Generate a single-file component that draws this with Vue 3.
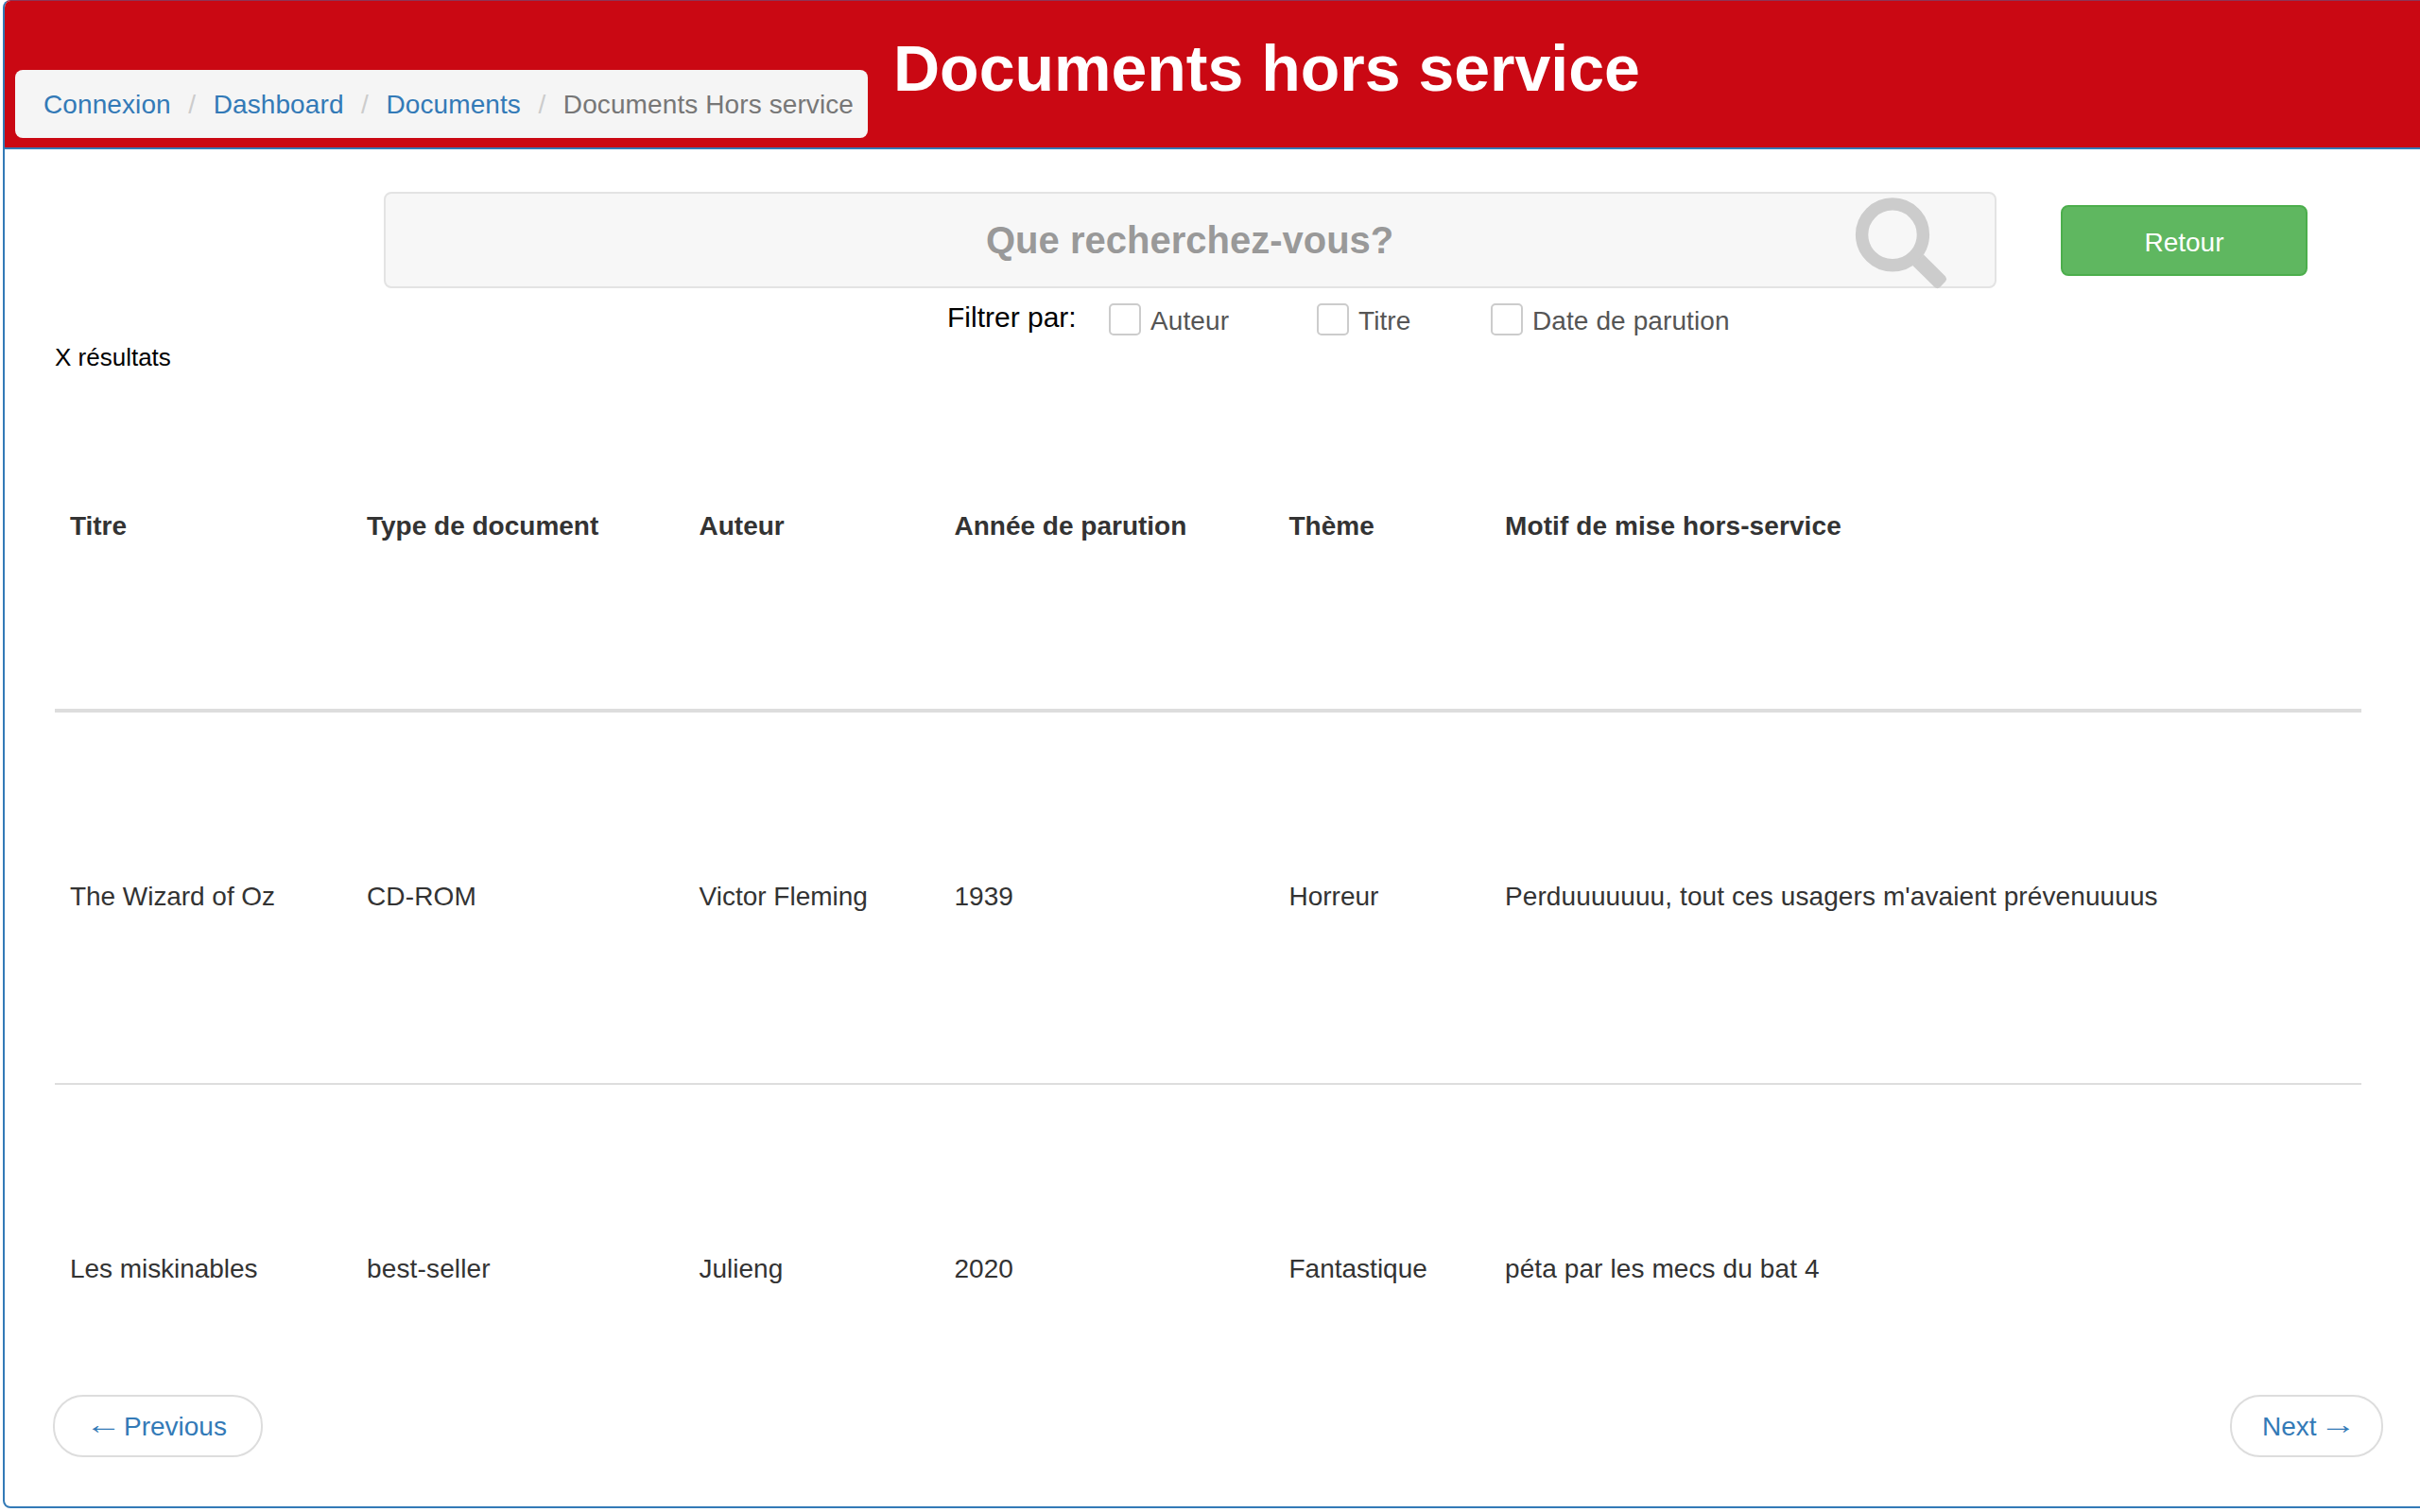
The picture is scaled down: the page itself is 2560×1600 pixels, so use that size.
<script setup>
const crumbs = ['Connexion', 'Dashboard', 'Documents']
const filters = ['Auteur', 'Titre', 'Date de parution']
const columns = ['Titre', 'Type de document', 'Auteur', 'Année de parution', 'Thème', 'Motif de mise hors-service']
const rows = [
  ['The Wizard of Oz', 'CD-ROM', 'Victor Fleming', '1939', 'Horreur', "Perduuuuuuu, tout ces usagers m'avaient prévenuuuus"],
  ['Les miskinables', 'best-seller', 'Julieng', '2020', 'Fantastique', 'péta par les mecs du bat 4'],
]
</script>

<template>
  <div class="page">
    <section class="panel">
      <header class="heading">
        <ol class="breadcrumb">
          <li v-for="c in crumbs" :key="c" class="crumb"><a class="link">{{ c }}</a></li>
          <li class="crumb active">Documents Hors service</li>
        </ol>
        <h1 class="title">Documents hors service</h1>
      </header>

      <div class="search-row">
        <div class="search">
          <span class="placeholder">Que recherchez-vous?</span>
          <svg class="glass" viewBox="0 0 96 97">
            <circle cx="39" cy="39.3" r="32.4" fill="none" stroke="#ccc" stroke-width="13.4" />
            <path d="M72 60.5 L94.6 83 Q97.4 86.3 94.6 89.3 L89.4 94.8 Q86.4 97.5 83.4 94.8 L60.3 72 Z" fill="#ccc" />
          </svg>
        </div>
        <button class="back">Retour</button>
      </div>

      <div class="filters">
        <span class="filters-label">Filtrer par:</span>
        <label v-for="f in filters" :key="f" class="filter"><i class="box"></i><span>{{ f }}</span></label>
      </div>

      <p class="count">X résultats</p>

      <div class="table">
        <div class="row head">
          <div v-for="c in columns" :key="c" class="cell">{{ c }}</div>
        </div>
        <div v-for="r in rows" :key="r[0]" class="row">
          <div v-for="c in r" :key="c" class="cell">{{ c }}</div>
        </div>
      </div>

      <nav class="pager">
        <a class="page-link prev"><span class="arrow">←</span><span>Previous</span></a>
        <a class="page-link next"><span>Next</span><span class="arrow">→</span></a>
      </nav>
    </section>
  </div>
</template>

<style>
body { margin: 0; background: #fff; }
</style>

<style scoped>
.page {
  width: 2560px;
  height: 1600px;
  overflow: hidden;
  font-family: "Liberation Sans", Arial, sans-serif;
  font-size: 28px;
  line-height: 40px;
  color: #333;
}
.page * { box-sizing: border-box; }
.panel {
  width: 2580px;
  height: 1596px;
  margin-left: 3px;
  border: 2px solid #337ab7;
  border-top: 1px solid #8d3557;
  border-radius: 8px;
  overflow: hidden;
}
.heading {
  display: flex;
  height: 157px;
  background: #ca0813;
  border-bottom: 2px solid #337ab7;
}
.breadcrumb {
  display: flex;
  width: 902px;
  height: 72px;
  margin: 73px 0 0 11px;
  padding: 17px 0 15px 30px;
  list-style: none;
  background: #f5f5f5;
  border-radius: 8px;
  letter-spacing: 0.1px;
}
.crumb { white-space: nowrap; }
.crumb + .crumb::before { content: "/"; color: #ccc; padding: 0 18.5px; }
.link { color: #337ab7; }
.active { color: #777; }
.title {
  margin: 34px 0 0 27px;
  font-size: 68px;
  line-height: 75px;
  color: #fff;
  white-space: nowrap;
}
.search-row { display: flex; margin: 45px 0 0 401px; }
.search {
  display: flex;
  align-items: center;
  width: 1706px;
  height: 102px;
  padding: 0 51px 0 0;
  border: 2px solid #e3e3e3;
  border-radius: 8px;
  background: #f7f7f7;
}
.placeholder {
  margin-left: 635px;
  font-size: 40px;
  line-height: 44px;
  font-weight: bold;
  color: #999;
  flex: 1;
}
.glass { width: 96px; height: 97px; margin-top: 6px; overflow: visible; }
.back {
  width: 261px;
  height: 75px;
  margin: 14px 0 0 68px;
  padding: 5px 0 0;
  border: 2px solid #4cae4c;
  border-radius: 8px;
  background: #5fb760;
  color: #fff;
  font: inherit;
}
.filters { display: flex; height: 55px; padding: 11px 0 0 997px; }
.filters-label { width: 171px; font-size: 30px; color: #000; }
.filter { display: flex; color: #555; letter-spacing: 0.1px; }
.filter:nth-of-type(1) { width: 220px; }
.filter:nth-of-type(2) { width: 184px; }
.box {
  width: 34px;
  height: 34px;
  margin: 5px 10px 0 0;
  border: 2px solid #ccc;
  border-radius: 5px;
  background: #fff;
}
.filter span { padding-top: 4px; }
.count { margin: 0 0 0 53px; height: 36px; font-size: 26px; line-height: 36px; color: #000; }
.table { width: 2440px; margin-left: 53px; }
.row {
  display: grid;
  grid-template-columns: 314px 351.5px 270px 354px 228.5px 1fr;
  height: 394px;
  padding-top: 175px;
  border-bottom: 2px solid #ddd;
}
.row.head { height: 358px; padding-top: 141px; border-bottom: 4px solid #ddd; font-weight: bold; }
.row:last-child { height: 328px; border-bottom: 0; }
.cell { padding-left: 16px; white-space: nowrap; }
.cell:nth-child(1) { letter-spacing: -0.05px; }
.cell:nth-child(6) { letter-spacing: 0.1px; }
.row:not(.head) .cell:nth-child(2) { letter-spacing: 0.15px; }
.pager { display: flex; justify-content: space-between; width: 2465px; margin-left: 51px; }
.page-link {
  display: flex;
  gap: 8px;
  height: 66px;
  padding: 12px 0 0;
  border: 2px solid #ddd;
  border-radius: 32px;
  color: #337ab7;
  white-space: nowrap;
}
.arrow { height: 38px; line-height: 36px; transform: scaleX(1.4); }
.prev { width: 222px; padding-left: 37px; }
.next { width: 162px; padding-left: 32px; }
</style>
